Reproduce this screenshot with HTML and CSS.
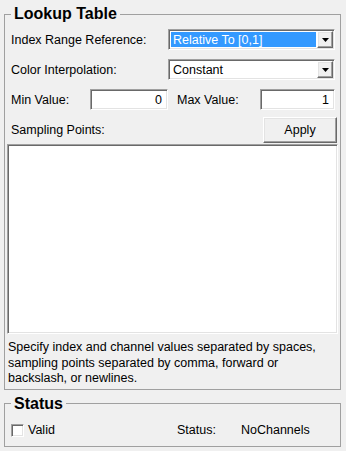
FILE: index.html
```html
<!DOCTYPE html>
<html lang="en">
<head>
  <meta charset="UTF-8">
  <title>Lookup Table</title>
  <link rel="stylesheet" href="styles.css">
</head>
<body>
  <fieldset class="group lookup">
    <legend>Lookup Table</legend>
    <div class="row combo-row">
      <span class="label">Index Range Reference:</span>
      <div class="combo sunken">
        <span class="combo-value selected">Relative To [0,1]</span>
        <span class="combo-arrow raised">
          <svg width="7" height="4" viewBox="0 0 7 4"><path d="M0 0h7L3.5 4z" fill="#000"/></svg>
        </span>
      </div>
    </div>
    <div class="row combo-row">
      <span class="label">Color Interpolation:</span>
      <div class="combo sunken">
        <span class="combo-value">Constant</span>
        <span class="combo-arrow raised">
          <svg width="7" height="4" viewBox="0 0 7 4"><path d="M0 0h7L3.5 4z" fill="#000"/></svg>
        </span>
      </div>
    </div>
    <div class="row range-row">
      <span class="label">Min Value:</span>
      <span class="field sunken">0</span>
      <span class="label max-label">Max Value:</span>
      <span class="field sunken">1</span>
    </div>
    <div class="row points-row">
      <span class="label">Sampling Points:</span>
      <span class="button raised">Apply</span>
    </div>
    <div class="points-box sunken"></div>
    <p class="hint">Specify index and channel values separated by spaces, sampling points separated by comma, forward or backslash, or newlines.</p>
  </fieldset>

  <fieldset class="group status">
    <legend>Status</legend>
    <div class="status-row">
      <span class="check-wrap"><span class="checkbox sunken"></span>Valid</span>
      <span>Status:</span>
      <span>NoChannels</span>
    </div>
  </fieldset>
</body>
</html>
```

FILE: styles.css
```css
* {
  box-sizing: border-box;
}
body {
  margin: 0;
  padding-top: 5px;
  background: #f0f0f0;
  font-family: "Liberation Sans", Arial, sans-serif;
  font-size: 12.5px;
  color: #000;
}

/* group boxes */
.group {
  margin: 0 5px 0 4px;
  padding: 0;
  border: 1px solid #a0a0a0;
  min-width: 0;
}
.group legend {
  font-weight: bold;
  font-size: 16px;
  line-height: 18px;
  padding: 0 3px;
  margin-left: 6px;
}
.lookup {
  padding: 6px 0 2px;
}
.status {
  margin-top: 5px;
  padding: 7px 0 5px;
}

/* 3d borders */
.sunken {
  border: 1px solid;
  border-color: #a0a0a0 #fff #fff #a0a0a0;
  box-shadow: inset 1px 1px 0 #696969, inset -1px -1px 0 #e3e3e3;
  background: #fff;
}
.raised {
  border: 1px solid;
  border-color: #fff #696969 #696969 #fff;
  box-shadow: inset -1px -1px 0 #a0a0a0, inset 1px 1px 0 #e3e3e3;
  background: #f0f0f0;
}

/* rows */
.row {
  display: flex;
  align-items: center;
  height: 21px;
  padding-left: 6px;
  margin-bottom: 9px;
}
.combo-row {
  justify-content: space-between;
  padding-right: 5px;
}
.combo {
  width: 167px;
  height: 21px;
  padding: 1px;
  display: flex;
}
.combo-value {
  flex: 1;
  margin: 1px;
  padding-left: 2px;
  display: flex;
  align-items: center;
}
.combo-value.selected {
  background: #3399ff;
  color: #fff;
}
.combo-arrow {
  width: 16px;
  display: flex;
  align-items: center;
  justify-content: center;
}

.range-row {
  display: grid;
  grid-template-columns: 79px 78px 92px 75px;
}
.max-label {
  padding-left: 9px;
}
.field {
  height: 21px;
  display: flex;
  align-items: center;
  justify-content: flex-end;
  padding-right: 5px;
}

.points-row {
  height: 26px;
  margin: -2px 0 0;
  justify-content: space-between;
  padding-right: 3px;
}
.button {
  width: 74px;
  height: 26px;
  display: flex;
  align-items: center;
  justify-content: center;
}
.points-box {
  margin: 1px 2px 0;
  height: 190px;
}
.hint {
  margin: 0;
  padding: 6px 0 0 3px;
  line-height: 15.5px;
}

/* status */
.status-row {
  display: grid;
  grid-template-columns: 166px 64px 1fr;
  align-items: center;
  height: 21px;
  padding-left: 6px;
}
.check-wrap {
  display: flex;
  align-items: center;
}
.checkbox {
  width: 13px;
  height: 13px;
  margin-right: 4px;
}
```
